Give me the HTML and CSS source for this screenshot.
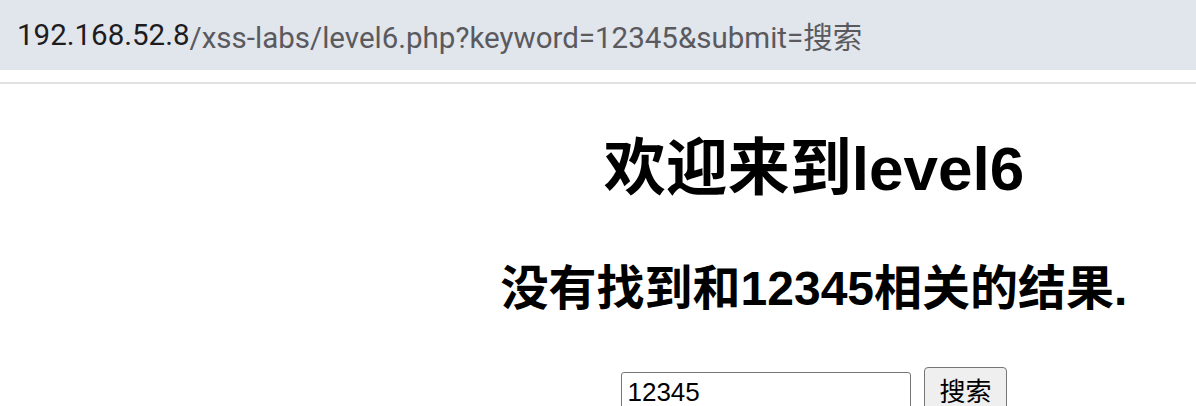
FILE: index.html
```html
<!DOCTYPE html>
<html lang="zh-CN">
<head>
<meta charset="utf-8">
<title>level6</title>
<link rel="stylesheet" href="styles.css">
</head>
<body>
<div class="urlbar"><span class="host">192.168.52.8</span><span class="path">/xss-labs/level6.php?keyword=12345&amp;submit=搜索</span></div>
<div class="sep"></div>
<div class="page">
  <h1 class="title">欢迎来到level6</h1>
  <h2 class="result">没有找到和12345相关的结果.</h2>
  <form class="search">
    <input class="field" name="keyword" value="12345">
    <button class="btn" type="button">搜索</button>
  </form>
</div>
</body>
</html>
```

FILE: styles.css
```css
html, body {
  margin: 0;
  padding: 0;
  background: #ffffff;
}
body {
  overflow: hidden;
  width: 1196px;
  height: 406px;
  font-family: "Liberation Sans", "Noto Sans CJK SC", sans-serif;
  color: #000;
}
.urlbar {
  height: 70px;
  background: #e1e5ec;
  display: flex;
  align-items: center;
  padding-left: 17px;
  font-family: Roboto, "Noto Sans CJK SC", sans-serif;
  font-size: 29.5px;
  white-space: nowrap;
}
.host { color: #1d1d1f; }
.path { color: #5a5a5e; }
.sep {
  margin-top: 12px;
  height: 2px;
  background: #e2e2e2;
}
.page {
  width: 1612px;
  margin: 0 8px;
  text-align: center;
}
.title {
  font-size: 62px;
  line-height: 62px;
  font-weight: bold;
  margin: 54px 0 0;
}
.result {
  font-size: 48px;
  line-height: 48px;
  font-weight: bold;
  margin: 65px 0 0;
}
.search {
  display: flex;
  justify-content: center;
  align-items: flex-start;
  gap: 13px;
  margin: 54px 0 0;
}
.field {
  box-sizing: border-box;
  width: 290px;
  height: 40px;
  margin-top: 5px;
  padding: 0 5px;
  font-family: "Liberation Sans", "Noto Sans CJK SC", sans-serif;
  font-size: 26px;
  color: #000;
  border: 1px solid #767676;
  border-radius: 3px;
  background: #fff;
}
.btn {
  box-sizing: border-box;
  height: 44px;
  padding: 0 14px;
  font-family: "Liberation Sans", "Noto Sans CJK SC", sans-serif;
  font-size: 26px;
  color: #000;
  background: #efefef;
  border: 1px solid #767676;
  border-radius: 4px;
}
```
